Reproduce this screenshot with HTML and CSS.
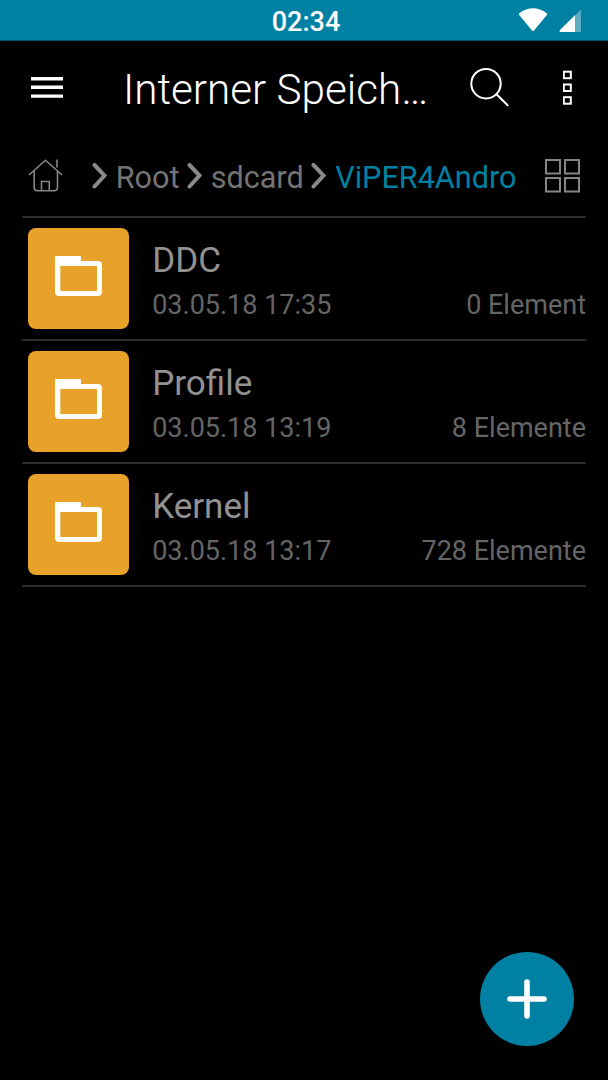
FILE: index.html
```html
<!DOCTYPE html>
<html lang="de">
<head>
<meta charset="utf-8">
<title>Interner Speicher</title>
<link rel="stylesheet" href="styles.css">
</head>
<body>

<div class="status-bar">
    <span class="clock">02:34</span>
    <svg class="status-icons" width="64" height="26" viewBox="0 0 64 26">
        <path d="M1.2 5.2Q15 -4.5 28.8 5.2Q29.6 5.9 29 6.7L16 22.5Q15 23.7 14 22.5L1 6.7Q.4 5.9 1.2 5.2Z" fill="#fff"/>
        <path d="M42 24Q41 23.3 42 22L62 2.5Q63 1.8 63 3V23Q63 24 62 24Z" fill="#5eacc4"/>
        <path d="M42 24Q41 23.3 42 22L57 7.3V24Z" fill="#fff"/>
    </svg>
</div>

<div class="app-bar">
    <svg class="menu-icon" width="32" height="22" viewBox="0 0 32 22">
        <path d="M0 1.7H32M0 10.3H32M0 19.1H32" stroke="#fff" stroke-width="3.4"/>
    </svg>
    <h1>Interner Speich…</h1>
    <svg class="search-icon" width="40" height="40" viewBox="0 0 40 40" fill="none" stroke="#fff" stroke-width="2" stroke-linecap="round">
        <circle cx="16" cy="15.7" r="14.7"/>
        <path d="M26.5 26.2L37.6 37.2"/>
    </svg>
    <svg class="more-icon" width="9" height="36" viewBox="0 0 9 36" fill="none" stroke="#fff" stroke-width="2">
        <rect x=".8" y="1.7" width="7" height="6.5"/>
        <rect x=".8" y="14.5" width="7" height="6.5"/>
        <rect x=".8" y="27.2" width="7" height="6.5"/>
    </svg>
</div>

<div class="content">
    <div class="path-bar">
        <svg class="home-icon" width="36" height="34" viewBox="0 0 36 34" fill="none" stroke="#858585" stroke-width="1.6">
            <path d="M1 16L17.5 1.2L34 16"/>
            <path d="M6.2 12V28.5Q6.2 31.7 9.5 31.7H26.2Q29.5 31.7 29.5 28.5V12"/>
            <path d="M13.5 31.5V22.5H21.3V31.5M29 .4V8.5"/>
        </svg>
        <div class="crumbs">
            <svg class="chevron" width="15" height="26" viewBox="0 0 15 26"><path d="M2.5 2L12.5 12.5L2.5 23.5"/></svg>
            <span class="crumb root">Root</span>
            <svg class="chevron" width="15" height="26" viewBox="0 0 15 26"><path d="M2.5 2L12.5 12.5L2.5 23.5"/></svg>
            <span class="crumb sdcard">sdcard</span>
            <svg class="chevron" width="15" height="26" viewBox="0 0 15 26"><path d="M2.5 2L12.5 12.5L2.5 23.5"/></svg>
            <span class="crumb current">ViPER4Andro</span>
        </div>
        <svg class="grid-icon" width="35" height="35" viewBox="0 0 35 35" fill="none" stroke="#858585" stroke-width="2">
            <rect x="1" y="1" width="14" height="13.5"/>
            <rect x="20" y="1" width="14" height="13.5"/>
            <rect x="1" y="19" width="14" height="13.5"/>
            <rect x="20" y="19" width="14" height="13.5"/>
        </svg>
    </div>

    <div class="row">
        <div class="tile">
            <svg width="47" height="41" viewBox="0 0 47 41"><path fill="#fff" fill-rule="evenodd" d="M0 2Q0 1 1 1H25Q26 1 26 2V6H43Q47 6 47 10V37Q47 41 43 41H4Q0 41 0 37ZM5.3 11V36H42V11Z"/></svg>
        </div>
        <div class="info">
            <div class="name">DDC</div>
            <div class="meta"><span>03.05.18 17:35</span><span>0 Element</span></div>
        </div>
    </div>

    <div class="row">
        <div class="tile">
            <svg width="47" height="41" viewBox="0 0 47 41"><path fill="#fff" fill-rule="evenodd" d="M0 2Q0 1 1 1H25Q26 1 26 2V6H43Q47 6 47 10V37Q47 41 43 41H4Q0 41 0 37ZM5.3 11V36H42V11Z"/></svg>
        </div>
        <div class="info">
            <div class="name">Profile</div>
            <div class="meta"><span>03.05.18 13:19</span><span>8 Elemente</span></div>
        </div>
    </div>

    <div class="row">
        <div class="tile">
            <svg width="47" height="41" viewBox="0 0 47 41"><path fill="#fff" fill-rule="evenodd" d="M0 2Q0 1 1 1H25Q26 1 26 2V6H43Q47 6 47 10V37Q47 41 43 41H4Q0 41 0 37ZM5.3 11V36H42V11Z"/></svg>
        </div>
        <div class="info">
            <div class="name">Kernel</div>
            <div class="meta"><span>03.05.18 13:17</span><span>728 Elemente</span></div>
        </div>
    </div>
</div>

<div class="add-button">
    <svg width="40" height="40" viewBox="0 0 40 40">
        <path d="M20 3V37M3 20H37" stroke="#fff" stroke-width="5.6" stroke-linecap="round"/>
    </svg>
</div>

</body>
</html>
```

FILE: styles.css
```css
* {
    box-sizing: border-box;
}

body {
    margin: 0;
    height: 1080px;
    overflow: hidden;
    background-color: #000;
    color: #fff;
    font-family: Roboto, "Noto Sans", sans-serif;
}

svg {
    display: block;
    flex: none;
}

.status-bar {
    display: grid;
    grid-template-columns: 1fr auto 1fr;
    height: 41px;
    padding: 0 26px 0 30px;
    background-color: #0080a2;
    border-bottom: 1px solid #045166;
}

.clock {
    grid-column: 2;
    font-size: 27px;
    font-weight: 500;
    line-height: 44px;
}

.status-icons {
    justify-self: end;
    margin-top: 8px;
}

.app-bar {
    display: flex;
    align-items: flex-start;
    height: 95px;
    padding: 0 36px 0 31px;
}

.menu-icon {
    margin-top: 36px;
}

.app-bar h1 {
    flex: 1;
    margin: 27px 0 0 60px;
    font-size: 42.2px;
    font-weight: 300;
    line-height: 44px;
    white-space: nowrap;
}

.search-icon {
    margin-top: 27px;
}

.more-icon {
    margin: 29px 0 0 53px;
}

.content {
    padding: 0 22px;
}

.path-bar {
    display: flex;
    align-items: center;
    height: 82px;
    padding: 0 6px;
    border-bottom: 2px solid #2c2c2c;
}

.crumbs {
    display: flex;
    flex: 1;
    align-items: center;
    margin-left: 28px;
    color: #747474;
    font-size: 30.6px;
    line-height: 37px;
}

.chevron {
    fill: none;
    stroke: #8a8a8a;
    stroke-width: 4;
    stroke-linecap: round;
}

.crumb {
    margin: 2px 7.5px 0 8.7px;
}

.current {
    margin-left: 9px;
    margin-right: 0;
    color: #0080a2;
}

.row {
    display: flex;
    height: 123px;
    padding: 10px 0 0 6px;
    border-bottom: 2px solid #2c2c2c;
}

.tile {
    display: flex;
    justify-content: center;
    width: 101px;
    height: 101px;
    padding-top: 27px;
    border-radius: 8px;
    background-color: #e8a22a;
}

.info {
    flex: 1;
    padding: 13px 0 0 23.2px;
}

.name {
    color: #929292;
    font-size: 35px;
    line-height: 40px;
}

.meta {
    display: flex;
    justify-content: space-between;
    margin-top: 8px;
    color: #656565;
    font-size: 27px;
    line-height: 32px;
}

.add-button {
    position: fixed;
    right: 34px;
    bottom: 34px;
    display: flex;
    align-items: center;
    justify-content: center;
    width: 94px;
    height: 94px;
    border-radius: 50%;
    background-color: #0080a2;
}
```
